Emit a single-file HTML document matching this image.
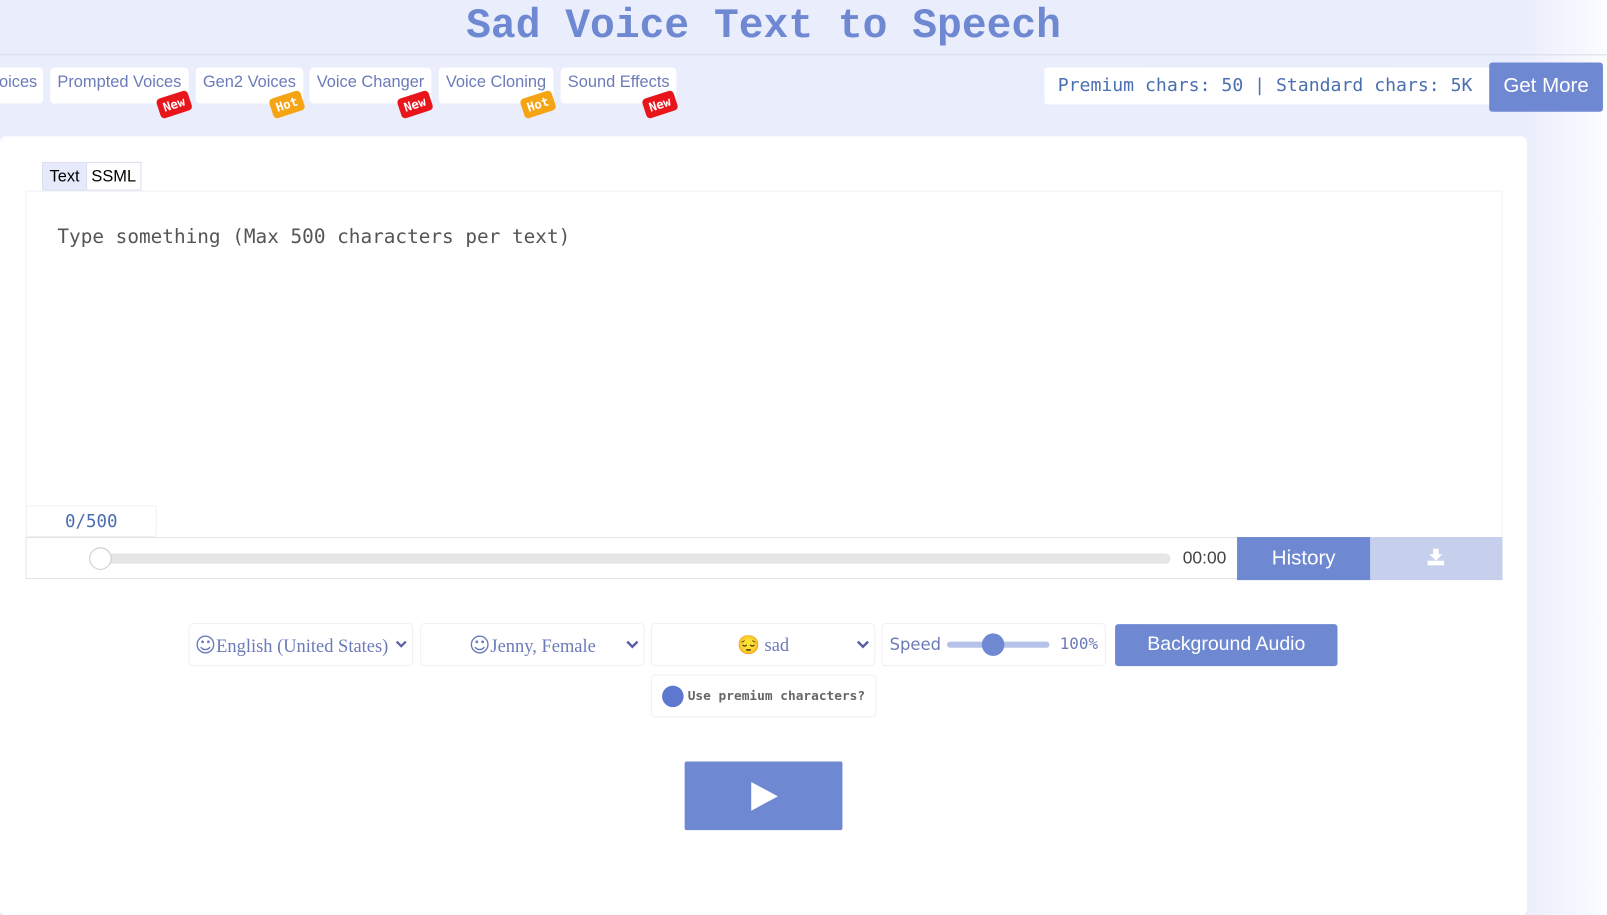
<!DOCTYPE html>
<html><head><meta charset="utf-8"><style>
*{box-sizing:border-box;margin:0;padding:0}
body{width:1607px;height:878px;overflow:hidden;position:relative;font-family:"Liberation Sans",sans-serif;background:linear-gradient(to right,#eaedfc 0,#eaedfc 1520px,#f8f9fe 1590px,#fdfdff 1607px);}
#w{position:absolute;left:0;top:0;width:1568px;height:857px;transform:scale(1.0249);transform-origin:0 0}
.a{position:absolute}
.title{left:0;width:1490px;top:1px;text-align:center;font-family:"Liberation Mono",monospace;font-weight:bold;font-size:40.3px;color:#6f88d2;line-height:50px}
.hr{left:0;top:53px;width:1607px;height:1px;background:#d8dbe8}
.tab{top:66px;height:35px;background:#fff;border-radius:4px;color:#6b7bb8;font-size:16px;line-height:30px;padding:0 7px}
.badge{font-family:"DejaVu Sans Mono",monospace;font-weight:bold;font-size:12px;color:#fff;padding:3px 5px;border-radius:4px;transform:rotate(-18deg);line-height:14px}
.new{background:#e8151b}.hot{background:#f5a414}
.card{left:0;top:133px;width:1490px;height:760px;background:#fff;border-radius:6px}
.mono{font-family:"DejaVu Sans Mono",monospace}
.sel{top:608px;height:42px;border:1px solid #eef0f6;border-radius:4px;color:#6b7bb8;font-family:"Liberation Serif",serif;font-size:18px;line-height:40px;background:#fff}
.sm{font-family:"DejaVu Sans",sans-serif;font-size:20px}
.chev{position:absolute;top:16px}
</style></head><body><div id="w">
<div class="a title">Sad Voice Text to Speech</div>
<div class="a hr"></div>
<div class="a tab" style="left:-8px;width:50px">oices</div>
<div class="a tab" style="left:49px">Prompted Voices</div>
<div class="a tab" style="left:191px">Gen2 Voices</div>
<div class="a tab" style="left:302px">Voice Changer</div>
<div class="a tab" style="left:428px">Voice Cloning</div>
<div class="a tab" style="left:547px">Sound Effects</div>
<div class="a badge new" style="left:154px;top:92px">New</div>
<div class="a badge hot" style="left:264px;top:92px">Hot</div>
<div class="a badge new" style="left:389px;top:92px">New</div>
<div class="a badge hot" style="left:509px;top:92px">Hot</div>
<div class="a badge new" style="left:628px;top:92px">New</div>
<div class="a mono" style="left:1019px;top:66px;width:436px;height:36px;background:#fff;border-radius:3px;color:#4a6fb0;font-size:17.7px;line-height:36px;padding-left:13px">Premium chars: 50 | Standard chars: 5K</div>
<div class="a" style="left:1453px;top:61px;width:111px;height:48px;background:#6f88d2;border-radius:3px;color:#fff;font-size:20px;line-height:46px;text-align:center">Get More</div>
<div class="a card"></div>
<div class="a" style="left:41px;top:158px;width:44px;height:28px;background:#e7eafa;border:1px solid #dde;font-size:16px;line-height:27px;text-align:center">Text</div>
<div class="a" style="left:84px;top:158px;width:54px;height:28px;background:#fff;border:1px solid #dde;font-size:16px;line-height:27px;text-align:center">SSML</div>
<div class="a" style="left:25px;top:186px;width:1441px;height:379px;border:1px solid #eef0f5"></div>
<div class="a mono" style="left:56px;top:220px;font-size:18.9px;color:#555">Type something (Max 500 characters per text)</div>
<div class="a mono" style="left:25px;top:493px;width:128px;height:31px;border:1px solid #eef0f8;border-radius:3px;color:#4a6fb0;font-size:17px;line-height:30px;text-align:center">0/500</div>
<div class="a" style="left:25px;top:524px;width:1441px;height:41px;border:1px solid #e4e4e4;background:#fff"></div>
<div class="a" style="left:98px;top:540px;width:1044px;height:10px;background:#e6e6e6;border-radius:5px"></div>
<div class="a" style="left:87px;top:534px;width:22px;height:22px;border-radius:50%;background:#fff;border:1px solid #ccc"></div>
<div class="a" style="left:1154px;top:535px;font-size:17px;color:#444">00:00</div>
<div class="a" style="left:1207px;top:524px;width:130px;height:42px;background:#6f88d2;color:#fff;font-size:20px;line-height:42px;text-align:center">History</div>
<div class="a" style="left:1337px;top:524px;width:129px;height:42px;background:#c6cfec"></div>
<svg class="a" style="left:1392px;top:535px" width="18" height="17" viewBox="0 0 20 18"><path d="M7 0h6v6h4l-7 7-7-7h4z" fill="#fff"/><rect x="1" y="13" width="18" height="5" fill="#fff"/></svg>
<div class="a sel" style="left:184px;width:219px;padding-left:5px"><span class="sm">☺</span>English (United States)<svg class="chev" style="right:5px" width="11" height="8" viewBox="0 0 11 8"><path d="M1 1l4.5 4.5L10 1" stroke="#5a5fa8" stroke-width="2.2" fill="none"/></svg></div>
<div class="a sel" style="left:410px;width:219px;text-align:center"><span class="sm">☺</span>Jenny, Female<svg class="chev" style="right:5px" width="12" height="8" viewBox="0 0 12 8"><path d="M1 1l5 5 5-5" stroke="#5a5fa8" stroke-width="2.4" fill="none"/></svg></div>
<div class="a sel" style="left:635px;width:219px;text-align:center">😔 sad<svg class="chev" style="right:5px" width="12" height="8" viewBox="0 0 12 8"><path d="M1 1l5 5 5-5" stroke="#5a5fa8" stroke-width="2.4" fill="none"/></svg></div>
<div class="a sel" style="left:860px;width:219px;font-family:'DejaVu Sans',sans-serif;font-size:16px;padding-left:7px">Speed</div>
<div class="a" style="left:924px;top:626px;width:100px;height:6px;background:#b7c2e8;border-radius:3px"></div>
<div class="a" style="left:958px;top:618px;width:22px;height:22px;border-radius:50%;background:#6f88d2"></div>
<div class="a mono" style="left:1034px;top:619px;font-size:15.5px;color:#6b7bb8">100%</div>
<div class="a" style="left:1088px;top:609px;width:217px;height:41px;background:#6f88d2;border-radius:3px;color:#fff;font-size:19px;line-height:40px;text-align:center">Background Audio</div>
<div class="a" style="left:635px;top:658px;width:220px;height:42px;border:1px solid #eef0f6;border-radius:4px"></div>
<div class="a" style="left:646px;top:669px;width:21px;height:21px;border-radius:50%;background:#5f78cf"></div>
<div class="a" style="left:671px;top:671px;font-family:'DejaVu Sans Mono',monospace;font-weight:bold;font-size:12.5px;color:#666">Use premium characters?</div>
<div class="a" style="left:668px;top:743px;width:154px;height:67px;background:#6f88d2;border-radius:2px"></div>
<svg class="a" style="left:731px;top:762px" width="30" height="30" viewBox="0 0 30 30"><path d="M2 1L28 15L2 29Z" fill="#fff"/></svg>
</div></body></html>
